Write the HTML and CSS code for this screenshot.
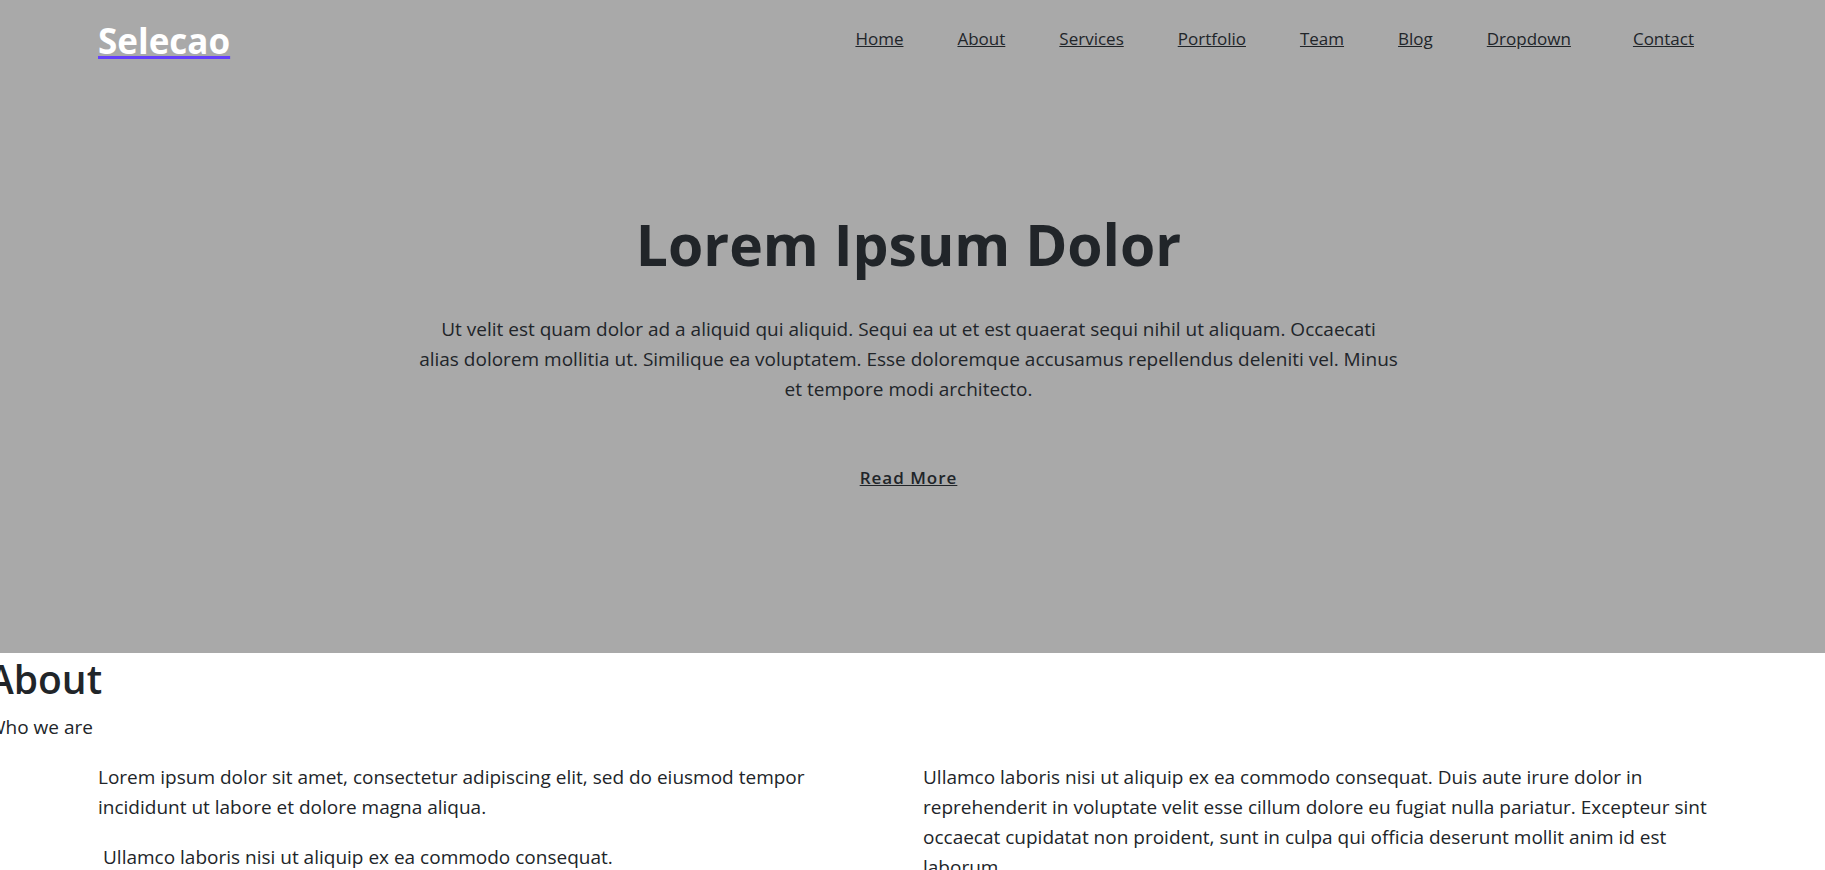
FILE: index.html
```html
<!DOCTYPE html>
<html lang="en">
<head>
<meta charset="utf-8">
<title>Selecao</title>
<link rel="stylesheet" href="styles.css">
</head>
<body>
<div class="banner">
  <header class="header">
    <a class="logo" href="#">Selecao</a>
    <nav class="nav">
      <a href="#">Home</a>
      <a href="#about">About</a>
      <a href="#">Services</a>
      <a href="#">Portfolio</a>
      <a href="#">Team</a>
      <a href="#">Blog</a>
      <a class="has-menu" href="#">Dropdown</a>
      <a href="#">Contact</a>
    </nav>
  </header>
  <section class="hero">
    <h1>Lorem Ipsum Dolor</h1>
    <p>Ut velit est quam dolor ad a aliquid qui aliquid. Sequi ea ut et est quaerat sequi nihil ut aliquam. Occaecati<br> alias dolorem mollitia ut. Similique ea voluptatem. Esse doloremque accusamus repellendus deleniti vel. Minus<br> et tempore modi architecto.</p>
    <a class="more" href="#about">Read More</a>
  </section>
</div>
<section class="about" id="about">
  <div class="about-title">
    <h2>About</h2>
    <p>Who we are</p>
  </div>
  <div class="columns">
    <div>
      <p>Lorem ipsum dolor sit amet, consectetur adipiscing elit, sed do eiusmod tempor incididunt ut labore et dolore magna aliqua.</p>
      <p class="item">Ullamco laboris nisi ut aliquip ex ea commodo consequat.</p>
    </div>
    <div>
      <p>Ullamco laboris nisi ut aliquip ex ea commodo consequat. Duis aute irure dolor in reprehenderit in voluptate velit esse cillum dolore eu fugiat nulla pariatur. Excepteur sint occaecat cupidatat non proident, sunt in culpa qui officia deserunt mollit anim id est laborum.</p>
    </div>
  </div>
</section>
</body>
</html>
```
FILE: styles.css
```css
* {
  box-sizing: border-box;
}

body {
  margin: 0;
  overflow-x: hidden;
  background: #fff;
  color: #212529;
  font: 400 19px/30px "Segoe UI", "Open Sans", sans-serif;
}

h1, h2, p {
  margin: 0;
}

a {
  color: inherit;
}

.banner {
  background: #a9a9a9;
  padding-bottom: 160px;
}

.header {
  display: flex;
  justify-content: space-between;
  align-items: flex-start;
  padding: 15px 131px 0 98px;
}

.logo {
  color: #fff;
  font-size: 35px;
  font-weight: 700;
  line-height: 52px;
  text-decoration: underline #6440fb 3px;
  text-underline-offset: 2px;
  text-decoration-skip-ink: none;
}

.nav {
  display: flex;
  gap: 54px;
  padding-top: 9px;
  font-size: 17px;
  font-weight: 400;
}

.has-menu {
  margin-right: 8px;
}

.hero {
  display: flex;
  flex-direction: column;
  align-items: center;
  padding: 139px 8px 0 0;
  text-align: center;
}

.hero h1 {
  font-size: 57px;
  font-weight: 700;
  line-height: 76px;
}

.hero p {
  max-width: 1000px;
  margin-top: 32px;
}

.more {
  margin-top: 59px;
  font-size: 17px;
  font-weight: 600;
  letter-spacing: 1px;
}

.about-title {
  margin-left: -12px;
}

.about h2 {
  font-size: 39px;
  font-weight: 600;
  line-height: 52px;
  margin-bottom: 7px;
}

.columns {
  display: grid;
  grid-template-columns: 1fr 1fr;
  gap: 32px;
  padding: 20px 109px 0 98px;
}

.item {
  margin-top: 20px;
  padding-left: 5px;
}
```
